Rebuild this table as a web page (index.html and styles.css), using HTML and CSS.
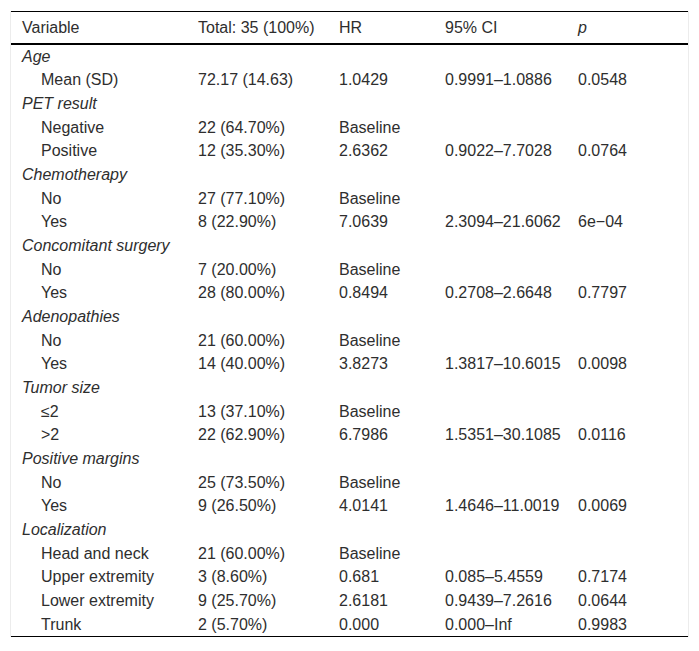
FILE: index.html
```html
<!DOCTYPE html>
<html>
<head>
<meta charset="utf-8">
<link rel="stylesheet" href="styles.css">
</head>
<body>
<div class="wrap">
<table class="tbl">
<colgroup>
<col class="c1"><col class="c2"><col class="c3"><col class="c4"><col class="c5">
</colgroup>
<thead>
<tr><th>Variable</th><th>Total: 35 (100%)</th><th>HR</th><th>95% CI</th><th><i>p</i></th></tr>
</thead>
<tbody>
<tr><td class="grp" colspan="5">Age</td></tr>
<tr><td class="ind">Mean (SD)</td><td>72.17 (14.63)</td><td>1.0429</td><td>0.9991–1.0886</td><td>0.0548</td></tr>
<tr><td class="grp" colspan="5">PET result</td></tr>
<tr><td class="ind">Negative</td><td>22 (64.70%)</td><td>Baseline</td><td></td><td></td></tr>
<tr><td class="ind">Positive</td><td>12 (35.30%)</td><td>2.6362</td><td>0.9022–7.7028</td><td>0.0764</td></tr>
<tr><td class="grp" colspan="5">Chemotherapy</td></tr>
<tr><td class="ind">No</td><td>27 (77.10%)</td><td>Baseline</td><td></td><td></td></tr>
<tr><td class="ind">Yes</td><td>8 (22.90%)</td><td>7.0639</td><td>2.3094–21.6062</td><td>6e−04</td></tr>
<tr><td class="grp" colspan="5">Concomitant surgery</td></tr>
<tr><td class="ind">No</td><td>7 (20.00%)</td><td>Baseline</td><td></td><td></td></tr>
<tr><td class="ind">Yes</td><td>28 (80.00%)</td><td>0.8494</td><td>0.2708–2.6648</td><td>0.7797</td></tr>
<tr><td class="grp" colspan="5">Adenopathies</td></tr>
<tr><td class="ind">No</td><td>21 (60.00%)</td><td>Baseline</td><td></td><td></td></tr>
<tr><td class="ind">Yes</td><td>14 (40.00%)</td><td>3.8273</td><td>1.3817–10.6015</td><td>0.0098</td></tr>
<tr><td class="grp" colspan="5">Tumor size</td></tr>
<tr><td class="ind">≤2</td><td>13 (37.10%)</td><td>Baseline</td><td></td><td></td></tr>
<tr><td class="ind">&gt;2</td><td>22 (62.90%)</td><td>6.7986</td><td>1.5351–30.1085</td><td>0.0116</td></tr>
<tr><td class="grp" colspan="5">Positive margins</td></tr>
<tr><td class="ind">No</td><td>25 (73.50%)</td><td>Baseline</td><td></td><td></td></tr>
<tr><td class="ind">Yes</td><td>9 (26.50%)</td><td>4.0141</td><td>1.4646–11.0019</td><td>0.0069</td></tr>
<tr><td class="grp" colspan="5">Localization</td></tr>
<tr><td class="ind">Head and neck</td><td>21 (60.00%)</td><td>Baseline</td><td></td><td></td></tr>
<tr><td class="ind">Upper extremity</td><td>3 (8.60%)</td><td>0.681</td><td>0.085–5.4559</td><td>0.7174</td></tr>
<tr><td class="ind">Lower extremity</td><td>9 (25.70%)</td><td>2.6181</td><td>0.9439–7.2616</td><td>0.0644</td></tr>
<tr><td class="ind">Trunk</td><td>2 (5.70%)</td><td>0.000</td><td>0.000–Inf</td><td>0.9983</td></tr>
</tbody>
</table>
</div>
</body>
</html>
```
FILE: styles.css
```css
html, body {
  margin: 0;
  padding: 0;
  background: #fff;
}
.wrap {
  margin: 11px 0 0 11px;
  width: 677px;
  box-sizing: content-box;
  border-right: 1px solid #ececec;
  border-left: 1px solid #ececec;
  margin-left: 10px;
}
.tbl {
  width: 677px;
  border-collapse: collapse;
  table-layout: fixed;
  font-family: "Liberation Sans", Arial, sans-serif;
  font-size: 16px;
  color: #2e2e2e;
  border-top: 1px solid #000;
  border-bottom: 1px solid #000;
}
.c1 { width: 176px; }
.c2 { width: 141px; }
.c3 { width: 106px; }
.c4 { width: 133px; }
.c5 { width: 121px; }
th {
  text-align: left;
  font-weight: normal;
  height: 31px;
  padding: 0 0 0 11px;
  line-height: 18px;
  vertical-align: middle;
  border-bottom: 2px solid #000;
}
td {
  padding: 0 0 0 11px;
  height: 23.667px;
  line-height: 18px;
  vertical-align: middle;
  white-space: nowrap;
}
.grp {
  font-style: italic;
}
.ind {
  padding-left: 30px;
}
```
